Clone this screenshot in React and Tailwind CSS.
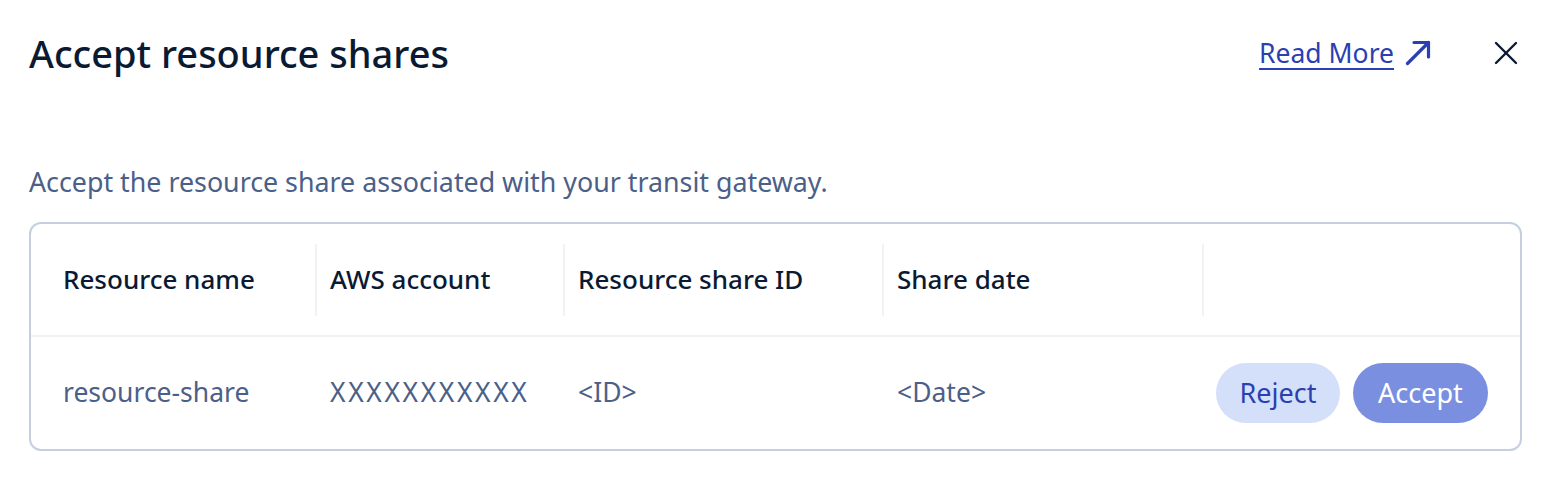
import React from "react";

const columns = [
  { label: "Resource name", w: "w-[284px]", pad: "pl-[32px]" },
  { label: "AWS account", w: "w-[248px]", pad: "pl-[13px]" },
  { label: "Resource share ID", w: "w-[319px]", pad: "pl-[13px]" },
  { label: "Share date", w: "w-[320px]", pad: "pl-[13px]" },
];

const row = ["resource-share", "XXXXXXXXXXX", "<ID>", "<Date>"];

export default function App() {
  return (
    <div className="w-[1552px] h-[482px] bg-white font-['Noto_Sans','Open_Sans',sans-serif]">
      {/* header */}
      <div className="flex items-center justify-between pl-[29px] pr-[34px] pt-[29px]">
        <h1 className="text-[38px] font-medium text-[#0b1a33] leading-[48px]">
          Accept resource shares
        </h1>
        <div className="flex items-center">
          <a href="#" className="text-[26.5px] text-[#2b3fb0] underline underline-offset-[5px] decoration-[2px] leading-[32px]">
            Read More
          </a>
          <svg className="ml-[11px]" width="26" height="26" viewBox="0 0 26 26" fill="none" stroke="#2b3fb0" strokeWidth="3.2" strokeLinecap="round" strokeLinejoin="round">
            <path d="M2.5 23.5 L23.5 2.5" />
            <path d="M9 2.5 H23.5 V17" />
          </svg>
          <svg className="ml-[63px]" width="24" height="24" viewBox="0 0 24 24" fill="none" stroke="#0b1a33" strokeWidth="2.4" strokeLinecap="round">
            <path d="M2 2 L22 22" />
            <path d="M22 2 L2 22" />
          </svg>
        </div>
      </div>

      <p className="pl-[29px] mt-[88px] text-[26.8px] text-[#4b6088] leading-[34px]">
        Accept the resource share associated with your transit gateway.
      </p>

      {/* table */}
      <div className="ml-[29px] mt-[23px] w-[1493px] border-2 border-[#c5cfe0] rounded-[12px] overflow-hidden">
        <div className="flex h-[113px] items-center border-b-2 border-[#f0f1f4]">
          {columns.map((c, i) => (
            <div
              key={c.label}
              className={`${c.w} ${c.pad} h-[72px] flex items-center text-[26px] font-medium text-[#0b1a33] ${i > 0 ? "border-l-2 border-[#f1f2f5]" : ""}`}
            >
              {c.label}
            </div>
          ))}
          <div className="flex-1 h-[72px] border-l-2 border-[#f1f2f5]" />
        </div>
        <div className="flex h-[112px] items-center">
          {row.map((v, i) => (
            <div
              key={i}
              className={`${columns[i].w} ${i === 0 ? "pl-[32px]" : "pl-[15px]"} ${i === 1 ? "tracking-[2.6px]" : ""} text-[26.5px] text-[#4b6088]`}
            >
              {v}
            </div>
          ))}
          <div className="flex-1 flex justify-end gap-[13px] pr-[32px]">
            <button className="w-[124px] h-[60px] rounded-full bg-[#d4dffa] text-[#2b3fb0] text-[27px]">
              Reject
            </button>
            <button className="w-[135px] h-[60px] rounded-full bg-[#7b8fe0] text-white text-[27px]">
              Accept
            </button>
          </div>
        </div>
      </div>
    </div>
  );
}
